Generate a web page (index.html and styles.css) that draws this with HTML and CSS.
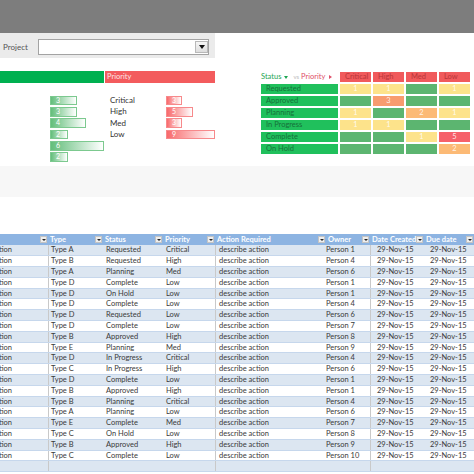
FILE: index.html
```html
<!DOCTYPE html>
<html>
<head>
<meta charset="utf-8">
<link rel="stylesheet" href="styles.css">
</head>
<body>
<div class="topbar"></div>
<div class="upper">
  <div class="left">
    <div class="project">
      <span class="plabel">Project</span>
      <div class="combo"><div class="drop"><span class="tri"></span></div></div>
    </div>
    <div class="chart">
      <div class="chart-head"><div class="h-green"></div><div class="h-red">Priority</div></div>
      <div class="chart-body">
        <div class="gbar" style="width:27px">3</div><div class="plab">Critical</div><div class="rbar" style="width:16px">3</div>
        <div class="gbar" style="width:27px">3</div><div class="plab">High</div><div class="rbar" style="width:27px">5</div>
        <div class="gbar" style="width:36px">4</div><div class="plab">Med</div><div class="rbar" style="width:16px">3</div>
        <div class="gbar" style="width:18px">2</div><div class="plab">Low</div><div class="rbar" style="width:49px">9</div>
        <div class="gbar" style="width:54px">6</div>
        <div class="gbar" style="width:18px">2</div>
      </div>
    </div>
  </div>
  <div class="right">
    <div class="matrix">
      <div class="mh"><span class="st">Status</span><span class="dtri"></span><span class="vs">vs</span><span class="pr">Priority</span><span class="rtri"></span></div>
      <div class="hc">Critical</div><div class="hc">High</div><div class="hc">Med</div><div class="hc">Low</div>

      <div class="lab">Requested</div><div class="c y">1</div><div class="c y">1</div><div class="c g"></div><div class="c y">1</div>
      <div class="lab">Approved</div><div class="c g"></div><div class="c o">3</div><div class="c g"></div><div class="c g"></div>
      <div class="lab">Planning</div><div class="c y">1</div><div class="c g"></div><div class="c lo">2</div><div class="c y">1</div>
      <div class="lab">In Progress</div><div class="c y">1</div><div class="c y">1</div><div class="c g"></div><div class="c g"></div>
      <div class="lab">Complete</div><div class="c g"></div><div class="c g"></div><div class="c y">1</div><div class="c r">5</div>
      <div class="lab">On Hold</div><div class="c g"></div><div class="c g"></div><div class="c g"></div><div class="c lo">2</div>
    </div>
  </div>
</div>
<div class="band"></div>
<div class="spacer"></div>
<div class="tbl">
  <div class="th">
    <div class="hcell"><span></span><i class="fb"></i></div>
    <div class="hcell"><span>Type</span><i class="fb"></i></div>
    <div class="hcell"><span>Status</span><i class="fb"></i></div>
    <div class="hcell"><span>Priority</span><i class="fb"></i></div>
    <div class="hcell"><span>Action Required</span><i class="fb"></i></div>
    <div class="hcell"><span>Owner</span><i class="fb"></i></div>
    <div class="hcell"><span>Date Created</span><i class="fb"></i></div>
    <div class="hcell"><span>Due date</span><i class="fb"></i></div>
  </div>
  <div class="rows">
    <div class="tr"><div>tion</div><div>Type A</div><div>Requested</div><div>Critical</div><div>describe action</div><div>Person 1</div><div class="d">29-Nov-15</div><div class="d">29-Nov-15</div></div>
    <div class="tr"><div>tion</div><div>Type B</div><div>Requested</div><div>High</div><div>describe action</div><div>Person 4</div><div class="d">29-Nov-15</div><div class="d">29-Nov-15</div></div>
    <div class="tr"><div>tion</div><div>Type A</div><div>Planning</div><div>Med</div><div>describe action</div><div>Person 6</div><div class="d">29-Nov-15</div><div class="d">29-Nov-15</div></div>
    <div class="tr"><div>tion</div><div>Type D</div><div>Complete</div><div>Low</div><div>describe action</div><div>Person 1</div><div class="d">29-Nov-15</div><div class="d">29-Nov-15</div></div>
    <div class="tr"><div>tion</div><div>Type D</div><div>On Hold</div><div>Low</div><div>describe action</div><div>Person 1</div><div class="d">29-Nov-15</div><div class="d">29-Nov-15</div></div>
    <div class="tr"><div>tion</div><div>Type D</div><div>Complete</div><div>Low</div><div>describe action</div><div>Person 4</div><div class="d">29-Nov-15</div><div class="d">29-Nov-15</div></div>
    <div class="tr"><div>tion</div><div>Type D</div><div>Requested</div><div>Low</div><div>describe action</div><div>Person 6</div><div class="d">29-Nov-15</div><div class="d">29-Nov-15</div></div>
    <div class="tr"><div>tion</div><div>Type D</div><div>Complete</div><div>Low</div><div>describe action</div><div>Person 7</div><div class="d">29-Nov-15</div><div class="d">29-Nov-15</div></div>
    <div class="tr"><div>tion</div><div>Type B</div><div>Approved</div><div>High</div><div>describe action</div><div>Person 8</div><div class="d">29-Nov-15</div><div class="d">29-Nov-15</div></div>
    <div class="tr"><div>tion</div><div>Type E</div><div>Planning</div><div>Med</div><div>describe action</div><div>Person 9</div><div class="d">29-Nov-15</div><div class="d">29-Nov-15</div></div>
    <div class="tr"><div>tion</div><div>Type D</div><div>In Progress</div><div>Critical</div><div>describe action</div><div>Person 4</div><div class="d">29-Nov-15</div><div class="d">29-Nov-15</div></div>
    <div class="tr"><div>tion</div><div>Type C</div><div>In Progress</div><div>High</div><div>describe action</div><div>Person 6</div><div class="d">29-Nov-15</div><div class="d">29-Nov-15</div></div>
    <div class="tr"><div>tion</div><div>Type D</div><div>Complete</div><div>Low</div><div>describe action</div><div>Person 1</div><div class="d">29-Nov-15</div><div class="d">29-Nov-15</div></div>
    <div class="tr"><div>tion</div><div>Type B</div><div>Approved</div><div>High</div><div>describe action</div><div>Person 1</div><div class="d">29-Nov-15</div><div class="d">29-Nov-15</div></div>
    <div class="tr"><div>tion</div><div>Type B</div><div>Planning</div><div>Critical</div><div>describe action</div><div>Person 4</div><div class="d">29-Nov-15</div><div class="d">29-Nov-15</div></div>
    <div class="tr"><div>tion</div><div>Type A</div><div>Planning</div><div>Low</div><div>describe action</div><div>Person 6</div><div class="d">29-Nov-15</div><div class="d">29-Nov-15</div></div>
    <div class="tr"><div>tion</div><div>Type E</div><div>Complete</div><div>Med</div><div>describe action</div><div>Person 7</div><div class="d">29-Nov-15</div><div class="d">29-Nov-15</div></div>
    <div class="tr"><div>tion</div><div>Type C</div><div>On Hold</div><div>Low</div><div>describe action</div><div>Person 8</div><div class="d">29-Nov-15</div><div class="d">29-Nov-15</div></div>
    <div class="tr"><div>tion</div><div>Type B</div><div>Approved</div><div>High</div><div>describe action</div><div>Person 9</div><div class="d">29-Nov-15</div><div class="d">29-Nov-15</div></div>
    <div class="tr"><div>tion</div><div>Type C</div><div>Complete</div><div>Low</div><div>describe action</div><div>Person 10</div><div class="d">29-Nov-15</div><div class="d">29-Nov-15</div></div>
    <div class="tr"><div></div><div></div><div></div><div></div><div></div><div></div><div></div><div></div></div>
  </div>
</div>
</body>
</html>
```

FILE: styles.css
```css
* { box-sizing: border-box; margin: 0; padding: 0; }
html, body { width: 474px; height: 474px; overflow: hidden; background: #fff; }
body { font-family: Lato, "Open Sans", sans-serif; color: #3a3a3a; }

.topbar { height: 33px; background: #7d7d7d; }

.upper { display: flex; height: 133px; }
.left { width: 215px; display: flex; flex-direction: column; }

.project { height: 25px; background: #ebebeb; display: flex; align-items: center; padding: 6px 0 3px 3px; }
.plabel { width: 35px; font-size: 8px; color: #555; line-height: 16px; }
.combo { width: 171px; height: 16px; background: #fff; border: 1px solid #a3a3a3; display: flex; justify-content: flex-end; padding: 1px 0 1px 1px; }
.drop { width: 13px; height: 12px; background: linear-gradient(#f6f6f6, #dedede); border: 1px solid #b9b9b9; display: flex; align-items: center; justify-content: center; }
.tri { width: 0; height: 0; border-left: 3px solid transparent; border-right: 3px solid transparent; border-top: 4px solid #111; }

.chart { height: 108px; background: #fff; }
.chart-head { display: flex; margin-top: 13px; height: 12px; }
.h-green { width: 104px; background: #00b050; }
.h-red { flex: 1; margin-left: 1px; background: #f35b5d; color: #fde4e4; font-size: 7.5px; line-height: 12px; padding-left: 2px; }

.chart-body { display: grid; grid-template-columns: 50px 60px 56px 49px; grid-auto-rows: 11.3px; padding-top: 12px; align-items: center; }
.gbar, .rbar { height: 9.5px; color: #fff; font-size: 7px; line-height: 7.5px; padding-left: 5px; }
.gbar { grid-column: 2; border: 1px solid #7cc98f; background: linear-gradient(90deg, #63be7b, #ffffff); }
.rbar { grid-column: 4; border: 1px solid #f7898b; background: linear-gradient(90deg, #f8696b, #ffffff); }
.plab { grid-column: 3; font-size: 8px; color: #333; line-height: 11px; }

.right { flex: 1; padding: 39px 0 0 46px; }
.matrix { display: grid; grid-template-columns: 77px repeat(4, 31px); grid-auto-rows: 10px; gap: 2px; font-size: 7.5px; line-height: 10px; }
.mh { display: flex; align-items: center; white-space: nowrap; }
.st { color: #1ea552; }
.dtri { width: 0; height: 0; border-left: 2.5px solid transparent; border-right: 2.5px solid transparent; border-top: 3px solid #1ea552; margin: 0 5px 0 3px; }
.vs { color: #bdbdbd; font-size: 6px; margin-right: 2px; }
.pr { color: #e0506a; }
.rtri { width: 0; height: 0; border-top: 2.5px solid transparent; border-bottom: 2.5px solid transparent; border-left: 3px solid #e0506a; margin-left: 4px; }
.hc { background: #f05a5c; color: #b93639; padding-left: 5px; }
.lab { background: #20c05c; color: #16703a; padding-left: 5px; }
.c { text-align: center; color: rgba(255, 255, 255, 0.85); }
.g { background: #5cb570; }
.y { background: #fde38b; }
.o { background: #f89c6f; }
.lo { background: #fcba76; }
.r { background: #f6606a; }

.band { height: 31px; background: #f7f7f7; }
.spacer { height: 37px; }

.th, .tr { display: grid; grid-template-columns: 48px 55px 60px 52px 111px 44px 54px 50px; }
.th { height: 11.4px; background: #8db4e2; }
.hcell { display: flex; align-items: center; justify-content: space-between; padding: 0 1px 0 2px; color: #fff; font-weight: 700; font-size: 7.5px; white-space: nowrap; overflow: hidden; }
.fb { flex: none; width: 7px; height: 7px; background: #eeeeee; border: 1px solid #c4c4c4; display: flex; align-items: center; justify-content: center; }
.fb::after { content: ""; width: 0; height: 0; border-left: 2px solid transparent; border-right: 2px solid transparent; border-top: 2.5px solid #222; }

.tr { height: 10.8px; font-size: 7.5px; line-height: 10px; border-bottom: 1px solid #c6d7ec; }
.rows .tr:nth-child(odd) { background: #dce6f1; }
.tr > div { padding-left: 3px; white-space: nowrap; overflow: hidden; }
.tr > div:first-child { padding-left: 0; text-indent: -1px; }
.tr > div:nth-child(2) { padding-left: 2px; }
.tr > div:nth-child(2), .tr > div:nth-child(5), .tr > div:nth-child(7) { border-left: 1px solid #c9c9c9; }
.tr > div:nth-child(6) { padding-left: 0; }
.tr > .d { padding-left: 6px; }
```
